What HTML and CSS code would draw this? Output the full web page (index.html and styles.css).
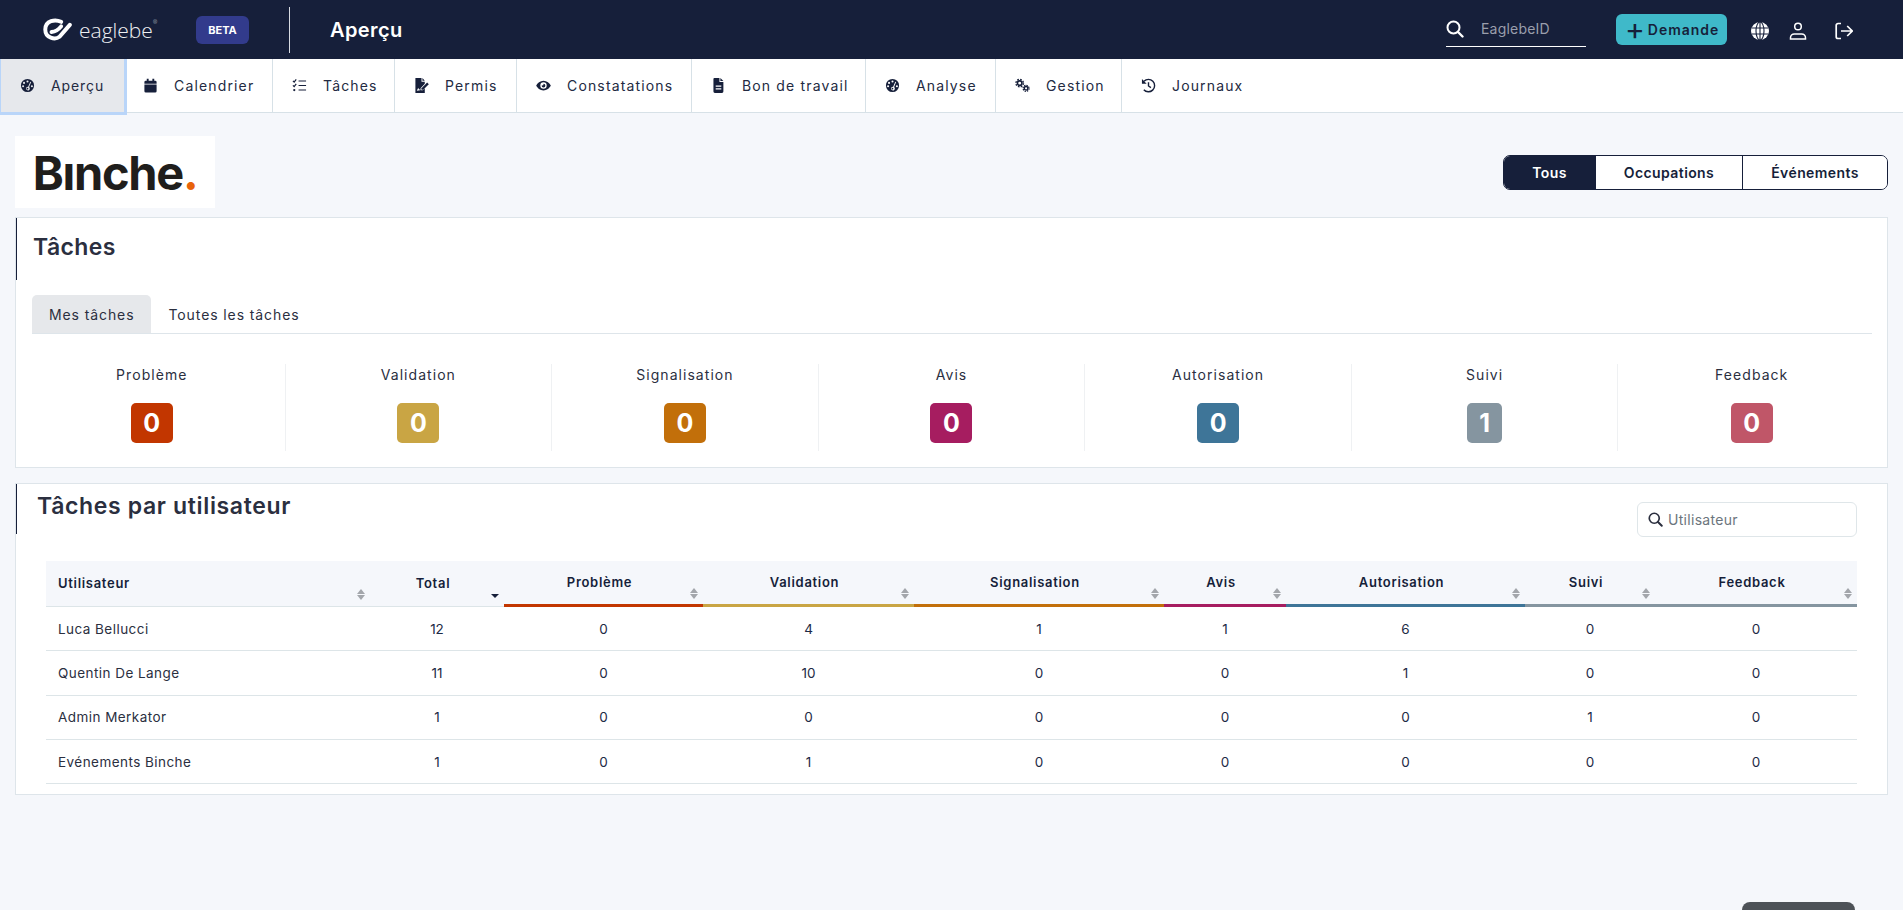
FILE: index.html
```html
<!DOCTYPE html>
<html lang="fr">
<head>
<meta charset="utf-8">
<title>Aperçu</title>
<link rel="stylesheet" href="styles.css">
</head>
<body>
<svg class="sprite" aria-hidden="true">
  <symbol id="i-gauge" viewBox="0 0 16 16"><path fill="currentColor" fill-rule="evenodd" d="M8 1a7 7 0 1 0 0 14A7 7 0 0 0 8 1zM8 2.6a1.1 1.1 0 1 1 0 2.2a1.1 1.1 0 0 1 0-2.2zM4.3 4.1a1.1 1.1 0 1 1 0 2.2a1.1 1.1 0 0 1 0-2.2zM3.3 7.6a1.1 1.1 0 1 1 0 2.2a1.1 1.1 0 0 1 0-2.2zM12.7 7.6a1.1 1.1 0 1 1 0 2.2a1.1 1.1 0 0 1 0-2.2zM11 3.9l.9.4l-2.2 5.4a2 2 0 1 1-1-.4zM8 10.4a.9.9 0 1 0 0 1.8a.9.9 0 0 0 0-1.8z"/></symbol>
  <symbol id="i-cal" viewBox="0 0 16 16"><path fill="currentColor" d="M4 .8h2v2h4v-2h2v2h1a1.5 1.5 0 0 1 1.5 1.5V6h-13V4.300A1.500 1.500 0 0 1 3 2.800h1zM1.500 7h13v7a1.500 1.500 0 0 1-1.500 1.500H3A1.500 1.500 0 0 1 1.500 14z"/></symbol>
  <symbol id="i-list" viewBox="0 0 16 16"><path fill="none" stroke="currentColor" stroke-width="1.300" d="M7 3.200h8M7 8h8M7 12.800h8M1 3l1.300 1.300L4.500 1.500M1 7.800l1.300 1.300l2.200-2.800"/><circle cx="2.400" cy="12.800" r="1.200" fill="currentColor"/></symbol>
  <symbol id="i-permit" viewBox="0 0 16 16"><path fill="currentColor" d="M1.500 0H8v4h3.500v2.200L7 10.800V13h2.300l2.200-2.100V16h-10zM9 0l2.500 3H9z"/><path fill="currentColor" d="M8 10.800l6-6l1.800 1.800l-6 6H8z"/><path fill="#fff" d="M3 13.500l1.500-3l1 2l1-.8v1.300z"/></symbol>
  <symbol id="i-eye" viewBox="0 0 16 16"><path fill="currentColor" fill-rule="evenodd" d="M8 2.800c3.600 0 6.500 2.500 7.800 5.200c-1.300 2.700-4.200 5.200-7.800 5.200S1.500 10.700.2 8C1.500 5.300 4.400 2.800 8 2.800zM8 4.600a3.400 3.400 0 1 0 0 6.800a3.400 3.400 0 0 0 0-6.800z"/><path fill="currentColor" d="M8 6a2 2 0 1 1-2 2l1.800-.3z"/></symbol>
  <symbol id="i-doc" viewBox="0 0 16 16"><path fill="currentColor" fill-rule="evenodd" d="M3.600 0H9v4.200h4.200V14.500A1.500 1.500 0 0 1 11.700 16H4.100A1.500 1.500 0 0 1 2.600 14.500V1A1 1 0 0 1 3.600 0zM5 8v1.200h6V8zM5 11v1.200h6V11z"/><path fill="currentColor" d="M10 0l3.200 3.200H10z"/></symbol>
  <symbol id="i-gears" viewBox="0 0 16 16"><circle cx="5" cy="5.500" r="2.400" fill="none" stroke="currentColor" stroke-width="1.700"/><circle cx="5" cy="5.500" r="4" fill="none" stroke="currentColor" stroke-width="1.500" stroke-dasharray="1.800 1.340"/><circle cx="11.800" cy="11" r="1.900" fill="none" stroke="currentColor" stroke-width="1.500"/><circle cx="11.800" cy="11" r="3.200" fill="none" stroke="currentColor" stroke-width="1.300" stroke-dasharray="1.500 1.010"/></symbol>
  <symbol id="i-history" viewBox="0 0 16 16"><path fill="none" stroke="currentColor" stroke-width="1.500" d="M3.200 3.500A6.600 6.600 0 1 1 3 12.500M8 4.500v4l2.600 1.800"/><path fill="currentColor" d="M1 1v5h5z"/></symbol>
  <symbol id="i-search" viewBox="0 0 18 18"><circle cx="7.500" cy="7.500" r="6" fill="none" stroke="currentColor" stroke-width="2"/><path stroke="currentColor" stroke-width="2.400" stroke-linecap="round" d="M12 12l4.500 4.500"/></symbol>
  <symbol id="i-globe" viewBox="0 0 18 18"><circle cx="9" cy="9" r="9" fill="#fff"/><g fill="none" stroke="#161f3a" stroke-width="1.100"><ellipse cx="9" cy="9" rx="4" ry="9"/><path d="M9 0v18M.5 6h17M.5 12h17"/></g></symbol>
  <symbol id="i-user" viewBox="0 0 18 18"><g fill="none" stroke="#fff" stroke-width="1.500"><circle cx="9" cy="4.500" r="3.300"/><path d="M1.500 17v-1.200c0-2.200 1.700-3.800 3.800-3.800h7.400c2.100 0 3.800 1.600 3.800 3.800V17z"/></g></symbol>
  <symbol id="i-logout" viewBox="0 0 18 18"><g fill="none" stroke="#fff" stroke-width="1.700"><path d="M6 1.500H3A1.800 1.800 0 0 0 1.200 3.300v11.400A1.800 1.800 0 0 0 3 16.500h3"/><path d="M6 9h11M12.200 4l5 5l-5 5"/></g></symbol>
</svg>

<header class="topbar">
  <div class="brand">
    <svg class="brand-mark" viewBox="0 0 28 22" aria-hidden="true"><g fill="none" stroke="#fff" stroke-width="3.800" stroke-linecap="round"><path d="M17.500 3.600C12 .9 2.200 2 2.200 11c0 8.500 9.600 10.200 13.700 7l10-11.500"/><path d="M8.200 13.400c4.300-.4 7.400-3 9.300-5.400"/></g></svg>
    <span class="brand-name">eaglebe<sup class="brand-reg">®</sup></span>
  </div>
  <span class="beta">BETA</span>
  <span class="top-divider"></span>
  <h1 class="page-name">Aperçu</h1>
  <div class="top-actions">
    <div class="id-search">
      <svg class="id-search-icon"><use href="#i-search"/></svg>
      <span class="id-search-text">EaglebeID</span>
    </div>
    <button class="new-request"><span class="plus">+</span>Demande</button>
    <svg class="top-icon icon-globe"><use href="#i-globe"/></svg>
    <svg class="top-icon icon-user"><use href="#i-user"/></svg>
    <svg class="top-icon icon-logout"><use href="#i-logout"/></svg>
  </div>
</header>

<nav class="mainnav">
  <a class="nav-item is-active"><svg class="nav-icon"><use href="#i-gauge"/></svg>Aperçu</a>
  <a class="nav-item"><svg class="nav-icon"><use href="#i-cal"/></svg>Calendrier</a>
  <a class="nav-item"><svg class="nav-icon"><use href="#i-list"/></svg>Tâches</a>
  <a class="nav-item"><svg class="nav-icon"><use href="#i-permit"/></svg>Permis</a>
  <a class="nav-item"><svg class="nav-icon"><use href="#i-eye"/></svg>Constatations</a>
  <a class="nav-item"><svg class="nav-icon"><use href="#i-doc"/></svg>Bon de travail</a>
  <a class="nav-item"><svg class="nav-icon"><use href="#i-gauge"/></svg>Analyse</a>
  <a class="nav-item"><svg class="nav-icon"><use href="#i-gears"/></svg>Gestion</a>
  <a class="nav-item nav-last"><svg class="nav-icon"><use href="#i-history"/></svg>Journaux</a>
</nav>

<main class="content">
  <div class="toolbar">
    <div class="city-logo"><span class="city-name">Bınche<span class="city-dot">.</span></span></div>
    <div class="segmented">
      <button class="seg seg-all is-on">Tous</button>
      <button class="seg seg-occ">Occupations</button>
      <button class="seg seg-evt">Événements</button>
    </div>
  </div>

  <section class="card card-tasks">
    <h2 class="card-title">Tâches</h2>
    <div class="tabs">
      <a class="tab is-current">Mes tâches</a>
      <a class="tab">Toutes les tâches</a>
    </div>
    <div class="stats">
      <div class="stat"><span class="stat-label">Problème</span><span class="count c-problem">0</span></div>
      <div class="stat"><span class="stat-label">Validation</span><span class="count c-validation">0</span></div>
      <div class="stat"><span class="stat-label">Signalisation</span><span class="count c-signal">0</span></div>
      <div class="stat"><span class="stat-label">Avis</span><span class="count c-avis">0</span></div>
      <div class="stat"><span class="stat-label">Autorisation</span><span class="count c-auth">0</span></div>
      <div class="stat"><span class="stat-label">Suivi</span><span class="count c-suivi">1</span></div>
      <div class="stat"><span class="stat-label">Feedback</span><span class="count c-feedback">0</span></div>
    </div>
  </section>

  <section class="card card-users">
    <div class="users-head">
      <h2 class="users-title">Tâches par utilisateur</h2>
      <div class="user-search">
        <svg class="user-search-icon"><use href="#i-search"/></svg>
        <span class="user-search-text">Utilisateur</span>
      </div>
    </div>
    <table class="user-table">
      <colgroup>
        <col class="w-user"><col class="w-total"><col class="w-problem"><col class="w-validation"><col class="w-signal"><col class="w-avis"><col class="w-auth"><col class="w-suivi"><col class="w-feedback">
      </colgroup>
      <thead>
        <tr>
          <th class="th-name">Utilisateur<span class="sort"></span></th>
          <th class="th-total">Total<span class="sort-down"></span></th>
          <th class="b-problem">Problème<span class="sort"></span></th>
          <th class="b-validation">Validation<span class="sort"></span></th>
          <th class="b-signal">Signalisation<span class="sort"></span></th>
          <th class="b-avis">Avis<span class="sort"></span></th>
          <th class="b-auth">Autorisation<span class="sort"></span></th>
          <th class="b-suivi">Suivi<span class="sort"></span></th>
          <th class="b-feedback">Feedback<span class="sort"></span></th>
        </tr>
      </thead>
      <tbody>
        <tr><td class="name">Luca Bellucci</td><td>12</td><td>0</td><td>4</td><td>1</td><td>1</td><td>6</td><td>0</td><td>0</td></tr>
        <tr><td class="name">Quentin De Lange</td><td>11</td><td>0</td><td>10</td><td>0</td><td>0</td><td>1</td><td>0</td><td>0</td></tr>
        <tr><td class="name">Admin Merkator</td><td>1</td><td>0</td><td>0</td><td>0</td><td>0</td><td>0</td><td>1</td><td>0</td></tr>
        <tr><td class="name">Evénements Binche</td><td>1</td><td>0</td><td>1</td><td>0</td><td>0</td><td>0</td><td>0</td><td>0</td></tr>
      </tbody>
    </table>
  </section>
</main>
<span class="floating-tab"></span>
</body>
</html>
```

FILE: styles.css
```css
* { box-sizing: border-box; }
html, body { height: 100%; overflow: hidden; }
body {
  margin: 0;
  background: #f5f7fb;
  color: #161f3a;
  font-family: Inter, "Liberation Sans", sans-serif;
  font-size: 14px;
}
h1, h2 { margin: 0; }
button { font-family: inherit; cursor: pointer; }
.sprite { position: absolute; width: 0; height: 0; }

/* top bar */
.topbar {
  position: relative;
  z-index: 2;
  display: flex;
  align-items: center;
  height: 59px;
  padding-left: 43px;
  background: #161f3a;
  color: #fff;
}
.brand { display: flex; align-items: center; width: 153px; }
.brand-mark { width: 29px; height: 23px; margin-right: 7px; }
.brand-name {
  font-family: "Open Sans", sans-serif;
  font-weight: 300;
  font-size: 21px;
  line-height: 24px;
  margin-top: 1px;
  color: #eef0f3;
}
.brand-reg { font-size: 5px; vertical-align: 14px; line-height: 0; }
.beta {
  display: flex;
  align-items: center;
  justify-content: center;
  width: 53px;
  height: 28px;
  border-radius: 6px;
  background: #323b8c;
  font-size: 11px;
  font-weight: 700;
}
.top-divider { width: 1px; height: 46px; margin-left: 40px; background: #d8dbe2; }
.page-name { margin-left: 40px; font-size: 20px; font-weight: 600; letter-spacing: .4px; }
.top-actions { display: flex; align-items: center; margin-left: auto; padding-right: 50px; }
.id-search {
  display: flex;
  align-items: center;
  width: 140px;
  height: 33px;
  margin-top: 2px;
  padding-bottom: 3px;
  border-bottom: 1px solid #fff;
}
.id-search-icon { width: 18px; height: 18px; color: #fff; }
.id-search-text { margin-left: 17px; color: #9a9eac; font-size: 14px; letter-spacing: .2px; }
.new-request {
  display: flex;
  align-items: center;
  width: 111px;
  height: 31px;
  margin-left: 30px;
  margin-top: -1px;
  padding: 0 0 0 9px;
  border: 0;
  border-radius: 6px;
  background: #3fb9c9;
  color: #161f3a;
  font-size: 14px;
  font-weight: 600;
  letter-spacing: .95px;
}
.plus { margin-right: 3px; font-size: 30px; font-weight: 400; line-height: 24px; letter-spacing: 0; }
.top-icon { width: 18px; height: 18px; margin-top: 2px; }
.icon-globe { margin-left: 24px; }
.icon-user { margin-left: 20px; }
.icon-logout { margin-left: 28px; }

/* nav */
.mainnav {
  position: relative;
  display: grid;
  grid-template-columns: 123px 149px 122px 122px 175px 174px 130px 126px 1fr;
  height: 54px;
  padding-left: 1px;
  border-bottom: 1px solid #d7e1e7;
  background: #fff;
}
.nav-item {
  display: flex;
  align-items: center;
  padding-left: 19px;
  border-right: 1px solid #d7e1e7;
  color: #232a42;
  font-size: 14px;
  letter-spacing: 1.150px;
}
.nav-last { border-right: 0; }
.nav-item.is-active {
  position: relative;
  background: #e6e8ec;
  outline: 3px solid #b9d5f9;
  border-right: 0;
  letter-spacing: .9px;
}
.nav-icon { flex: none; width: 15px; height: 15px; margin-right: 16px; color: #161f3a; }

/* content */
.content { padding: 23px 15px 0 15px; }
.toolbar { display: flex; align-items: center; justify-content: space-between; height: 72px; }
.city-logo {
  display: flex;
  align-items: center;
  justify-content: center;
  width: 200px;
  height: 72px;
  background: #fff;
}
.city-name { font-size: 47px; font-weight: 700; color: #1f1e1c; letter-spacing: -1.300px; }
.city-dot { color: #e8630a; }
.segmented {
  display: flex;
  height: 35px;
  margin-top: 1px;
  border: 1px solid #161f3a;
  border-radius: 7px;
  overflow: hidden;
  background: #fff;
}
.seg {
  padding: 0;
  border: 0;
  border-right: 1px solid #161f3a;
  background: #fff;
  color: #161f3a;
  font-size: 14px;
  font-weight: 600;
  letter-spacing: .4px;
}
.seg-all { width: 92px; }
.seg-occ { width: 147px; }
.seg-evt { width: 144px; border-right: 0; }
.seg.is-on { background: #161f3a; color: #fff; }

.card {
  position: relative;
  border: 1px solid #dee5ea;
  background: #fff;
}
.card::before {
  content: "";
  position: absolute;
  left: 0;
  top: 0;
  width: 1px;
  background: #161f3a;
}
.card-tasks { height: 251px; margin-top: 9px; }
.card-tasks::before { height: 62px; }
.card-users { height: 312px; margin-top: 15px; }
.card-users::before { height: 50px; }

.card-title {
  height: 77px;
  padding: 14px 0 0 17px;
  color: #2b2f3f;
  font-size: 23px;
  font-weight: 600;
  line-height: 30px;
  letter-spacing: .4px;
}
.tabs {
  display: flex;
  height: 39px;
  margin: 0 15px 0 16px;
  border-bottom: 1px solid #dee5ea;
}
.tab {
  display: flex;
  align-items: center;
  padding: 0 17px;
  color: #2b2f3f;
  font-size: 14px;
  letter-spacing: .9px;
}
.tab.is-current { background: #e6e8eb; border-radius: 5px 5px 0 0; }
.stats {
  display: grid;
  grid-template-columns: repeat(7, 1fr);
  height: 87px;
  margin: 30px 2px 0 3px;
}
.stat {
  display: flex;
  flex-direction: column;
  align-items: center;
  border-right: 1px solid #eff1f3;
}
.stat:last-child { border-right: 0; }
.stat-label { color: #2b2f3f; font-size: 14px; line-height: 22px; letter-spacing: 1.050px; }
.count {
  display: flex;
  align-items: center;
  justify-content: center;
  width: 42px;
  height: 40px;
  margin-top: 17px;
  border-radius: 5px;
  color: #fff;
  font-size: 25px;
  font-weight: 700;
}
.c-problem { background: #c23600; }
.c-validation { background: #c9a544; }
.c-signal { background: #c26f0a; }
.c-avis { background: #a61d60; }
.c-auth { background: #3e7598; }
.c-suivi { width: 35px; background: #8595a0; }
.c-feedback { background: #c05668; }

.users-head {
  display: flex;
  justify-content: space-between;
  align-items: flex-start;
  height: 77px;
  padding: 0 30px 0 21px;
}
.users-title {
  margin-top: 7px;
  color: #2b2f3f;
  font-size: 23px;
  font-weight: 600;
  line-height: 30px;
  letter-spacing: .65px;
}
.user-search {
  display: flex;
  align-items: center;
  width: 220px;
  height: 35px;
  margin-top: 18px;
  padding-left: 10px;
  border: 1px solid #dfe6e9;
  border-radius: 6px;
  background: #fff;
}
.user-search-icon { width: 15px; height: 15px; color: #2b2f3f; }
.user-search-text { margin-left: 5px; color: #6c757d; font-size: 14px; letter-spacing: .3px; }

.user-table {
  width: 1811px;
  margin-left: 30px;
  border-collapse: separate;
  border-spacing: 0;
  table-layout: fixed;
}
.w-user { width: 324px; }
.w-total { width: 134px; }
.w-problem { width: 199px; }
.w-validation { width: 211px; }
.w-signal { width: 250px; }
.w-avis { width: 122px; }
.w-auth { width: 239px; }
.w-suivi { width: 130px; }
.w-feedback { width: 202px; }

.user-table th {
  position: relative;
  height: 46px;
  padding: 0 8px 1px 0;
  background: #f5f7fb;
  border-bottom: 3px solid transparent;
  color: #161f3a;
  font-size: 13px;
  font-weight: 600;
  letter-spacing: .7px;
  text-align: center;
}
.user-table .th-name {
  padding-left: 12px;
  text-align: left;
  border-bottom: 1px solid #dde5e8;
}
.user-table .th-total { border-bottom: 1px solid #dde5e8; }
.user-table .b-problem { border-bottom-color: #c23600; }
.user-table .b-validation { border-bottom-color: #c9a544; }
.user-table .b-signal { border-bottom-color: #c26f0a; }
.user-table .b-avis { border-bottom-color: #a61d60; }
.user-table .b-auth { border-bottom-color: #3e7598; }
.user-table .b-suivi { border-bottom-color: #8595a0; }
.user-table .b-feedback { border-bottom-color: #8595a0; }

.sort, .sort-down { position: absolute; right: 5px; width: 8px; }
.sort { bottom: 5px; height: 11px; }
.sort::before, .sort::after {
  content: "";
  position: absolute;
  left: 0;
  border-left: 4px solid transparent;
  border-right: 4px solid transparent;
}
.sort::before { top: 0; border-bottom: 5px solid #a3a6ab; }
.sort::after { bottom: 0; border-top: 5px solid #a3a6ab; }
.sort-down {
  bottom: 8px;
  height: 0;
  border-left: 4px solid transparent;
  border-right: 4px solid transparent;
  border-top: 4px solid #161f3a;
}
.th-name .sort { bottom: 6px; }

.user-table td {
  height: 44.300px;
  padding: 0;
  border-bottom: 1px solid #dde5e8;
  color: #1d2a45;
  font-size: 13.500px;
  text-align: center;
}
.user-table .name {
  padding-left: 12px;
  color: #2b2f3f;
  font-size: 13.500px;
  letter-spacing: .45px;
  text-align: left;
}

.floating-tab {
  position: fixed;
  right: 48px;
  top: 902px;
  width: 113px;
  height: 30px;
  border-radius: 8px 8px 0 0;
  background: #4d5257;
}
```
